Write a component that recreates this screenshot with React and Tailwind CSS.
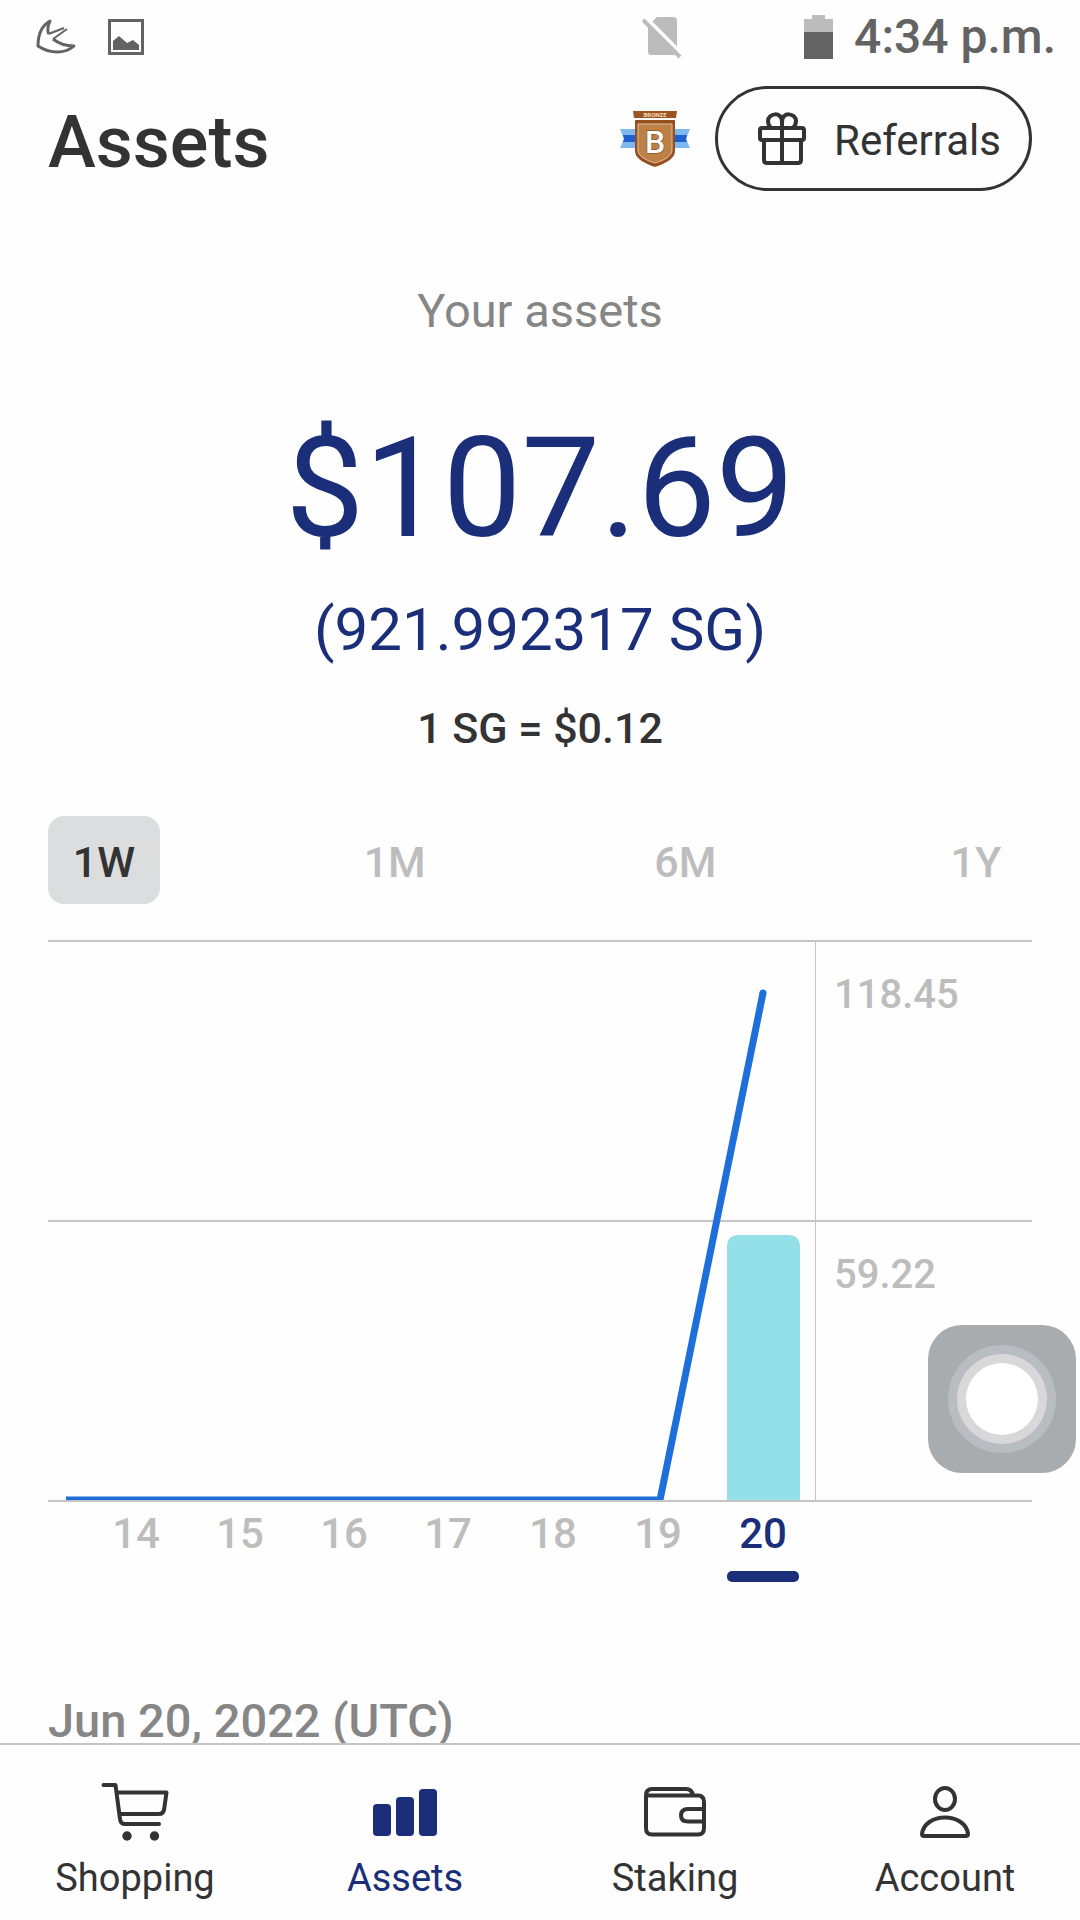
import React, { useState } from "react";

const ranges = ["1W", "1M", "6M", "1Y"];

const days = [
  { label: "14", x: 88 },
  { label: "15", x: 192 },
  { label: "16", x: 296 },
  { label: "17", x: 400 },
  { label: "18", x: 505 },
  { label: "19", x: 610 },
];

const BirdIcon = () => (
  <svg width="42" height="38" viewBox="0 0 42 38" fill="none" stroke="#636363" strokeWidth="2" aria-hidden="true">
    <path d="M28 11L12 16C11 11 12 7 14 3C5 8 2 17 2 28C14 36 29 36 38 28C29 28 22 25 17 21L30 12" stroke="none" />
    <path d="M12.500 16C11 11 12 7 14 3C5 8 2 17 2 28C14 36 29 36 38 28C29 28 22 25 17 21" strokeWidth="3" strokeLinejoin="round" />
    <path d="M12.500 16L28 10M17 21L31 11" strokeWidth="2" />
  </svg>
);

const ImageIcon = () => (
  <svg width="36" height="36" viewBox="0 0 36 36" fill="none" aria-hidden="true">
    <rect x="1.500" y="1.500" width="33" height="33" stroke="#636363" strokeWidth="3" />
    <path d="M5 22L11 17L19 24L25 21L31 26V31H5Z" fill="#636363" />
  </svg>
);

const NoSimIcon = () => (
  <svg width="40" height="44" viewBox="0 0 40 44" aria-hidden="true">
    <path d="M15 2H31Q35 2 35 6V37L35 39Q34 40 32 40H9Q6 40 6 37V11Z" fill="#bcbcbc" />
    <path d="M4 3L42 41" stroke="#fefefe" strokeWidth="4" />
    <path d="M1 5L38 42" stroke="#bcbcbc" strokeWidth="4" />
  </svg>
);

const BatteryIcon = () => (
  <svg width="30" height="44" viewBox="0 0 30 44" aria-hidden="true">
    <path d="M8 0H21V4H29V18H0V4H8Z" fill="#bcbcbc" />
    <path d="M0 17H29V44H0Z" fill="#636363" />
  </svg>
);

const BronzeBadge = () => (
  <svg width="72" height="60" viewBox="0 0 72 60" role="img" aria-label="Bronze level">
    <path d="M1 20H71L67 30L71 39H1L5 30Z" fill="#7db9ee" />
    <path d="M4 26H68L67 30L68 33H4L5 30Z" fill="#1e5fd0" />
    <path d="M14 2H58L57 9H15Z" fill="#9c5420" />
    <path d="M16 11H56V42C56 49 48 54 36 58C24 54 16 49 16 42Z" fill="#96501f" />
    <path d="M19 15H53V41C53 47 46 51 36 54C26 51 19 47 19 41Z" fill="#bd8047" stroke="#e0bf9d" strokeWidth="1" />
    <text x="36" y="8" textAnchor="middle" fontSize="6" fontWeight="700" fill="#f6dcc0">BRONZE</text>
    <text x="36" y="44" textAnchor="middle" fontSize="32" fontWeight="500" fill="#ffffff" stroke="#7c4219" strokeWidth="1" paintOrder="stroke">B</text>
  </svg>
);

const GiftIcon = () => (
  <svg width="52" height="56" viewBox="0 0 52 56" fill="none" stroke="currentColor" strokeWidth="4" strokeLinejoin="round" aria-hidden="true">
    <rect x="4" y="17" width="44" height="12" rx="2" />
    <path d="M8 29V49Q8 52 11 52H42Q45 52 45 49V29" />
    <path d="M26 17V52" />
    <path d="M26 16V11C26 0 12 2 12 10C12 13 13 15 15 17M26 11C26 0 40 2 40 10C40 13 39 15 37 17" />
  </svg>
);

const CartIcon = () => (
  <svg width="72" height="64" viewBox="0 0 72 64" fill="none" stroke="currentColor" strokeWidth="4" strokeLinecap="round" strokeLinejoin="round" aria-hidden="true">
    <path d="M4.500 5H16.500L21 39Q21.500 44 26 44H60" />
    <path d="M18 12.500H67.500L65 30Q64 34 60 34H21" />
    <circle cx="28" cy="56" r="4.700" fill="currentColor" stroke="none" />
    <circle cx="55.500" cy="56" r="4.700" fill="currentColor" stroke="none" />
  </svg>
);

const BarsIcon = () => (
  <svg width="72" height="64" viewBox="0 0 72 64" fill="currentColor" aria-hidden="true">
    <rect x="4" y="24" width="18" height="32" rx="4" />
    <rect x="27" y="17" width="18" height="39" rx="4" />
    <rect x="50" y="9" width="18" height="47" rx="4" />
  </svg>
);

const WalletIcon = () => (
  <svg width="72" height="64" viewBox="0 0 72 64" fill="none" stroke="currentColor" strokeWidth="4" strokeLinejoin="round" aria-hidden="true">
    <path d="M7 16V48Q7 54.500 13 54.500H59Q65 54.500 65 48V22Q65 15.500 59 15.500H7Q7 9 13 9H47Q53 9 54 15.500" />
    <path d="M65 29H49Q42 29 42 35.500Q42 41.500 49 41.500H65" />
  </svg>
);

const PersonIcon = () => (
  <svg width="72" height="64" viewBox="0 0 72 64" fill="none" stroke="currentColor" strokeWidth="4" strokeLinejoin="round" aria-hidden="true">
    <ellipse cx="36" cy="19" rx="10" ry="11" />
    <path d="M15 56Q13 56 13 54C14 44 24 37.500 36 37.500S58 44 59 54Q59 56 57 56Z" />
  </svg>
);

const navItems = [
  { name: "Shopping", Icon: CartIcon },
  { name: "Assets", Icon: BarsIcon },
  { name: "Staking", Icon: WalletIcon },
  { name: "Account", Icon: PersonIcon },
];

const AssetsChart = () => (
  <svg
    viewBox="0 0 984 644"
    className="block w-full mt-9 text-[42px] font-medium"
    role="img"
    aria-label="Asset value over the last week"
  >
    <defs>
      <clipPath id="plot">
        <rect x="0" y="0" width="984" height="560" />
      </clipPath>
    </defs>

    {/* Grid */}
    <g fill="#c4c4c4">
      <rect y="0" width="984" height="2" />
      <rect y="280" width="984" height="2" />
      <rect x="767" y="2" width="1" height="558" />
    </g>

    <path d="M679 560V307Q679 295 691 295H740Q752 295 752 307V560Z" fill="#93e0e8" />
    <path
      d="M18 560H612L715 53"
      fill="none"
      stroke="#1f6fdb"
      strokeWidth="7"
      strokeLinejoin="round"
      clipPath="url(#plot)"
    />
    <circle cx="715" cy="53" r="3.500" fill="#1f6fdb" />
    <rect y="560" width="984" height="2" fill="#c4c4c4" />

    {/* Value axis */}
    <g fill="#bdbdbd" fontSize="40">
      <text x="786" y="68">118.45</text>
      <text x="786" y="348">59.22</text>
    </g>

    {/* Days */}
    <g fill="#bdbdbd" textAnchor="middle">
      {days.map((day) => (
        <text key={day.label} x={day.x} y="608">
          {day.label}
        </text>
      ))}
    </g>
    <text x="715" y="608" textAnchor="middle" fill="#1a2e7a">
      20
    </text>
    <rect x="679" y="631" width="72" height="11" rx="5" fill="#1a2e7a" />
  </svg>
);

export default function App() {
  const [range, setRange] = useState("1W");

  return (
    <div className="h-screen flex flex-col bg-[#fefefe] text-[#333333] font-['Roboto',sans-serif]">
      {/* Status bar */}
      <div className="shrink-0 h-[74px] pl-9 pr-6 flex items-center justify-between">
        <div className="flex items-center gap-[30px]">
          <BirdIcon />
          <ImageIcon />
        </div>
        <div className="flex items-center">
          <NoSimIcon />
          <div className="ml-[122px] flex items-center gap-5">
            <BatteryIcon />
            <span className="text-[48px] leading-[56px] font-medium text-[#636363]">4:34 p.m.</span>
          </div>
        </div>
      </div>

      <main className="flex-1 min-h-0 overflow-y-auto [scrollbar-width:none] px-12 pt-3">
        {/* Header */}
        <div className="flex items-center justify-between">
          <h1 className="pt-2 text-[72px] leading-[80px] font-medium">Assets</h1>
          <div className="flex items-center gap-6">
            <BronzeBadge />
            <button
              type="button"
              className="h-[105px] pl-[38px] pr-7 flex items-center gap-[26px] border-3 border-[#333333] rounded-full text-[42px] leading-[48px]"
            >
              <GiftIcon />
              <span className="pt-1">Referrals</span>
            </button>
          </div>
        </div>

        {/* Balance */}
        <div className="mt-[92px] text-center">
          <p className="text-[47px] leading-[56px] text-[#868686]">Your assets</p>
          <p className="mt-[79px] text-[140px] leading-[140px] text-[#1a2e7a]">$107.69</p>
          <p className="mt-9 text-[60px] leading-[72px] text-[#1a2e7a]">(921.992317 SG)</p>
          <p className="mt-[34px] text-[43px] leading-[56px] font-medium">1 SG = $0.12</p>
        </div>

        {/* Range */}
        <div className="mt-[60px] flex justify-between">
          {ranges.map((item) => (
            <button
              key={item}
              type="button"
              onClick={() => setRange(item)}
              className={`w-28 h-[88px] pt-[3px] rounded-2xl text-[43px] leading-[56px] font-medium ${
                item === range ? "bg-[#dcdddf] text-[#333333]" : "text-[#bdbdbd]"
              }`}
            >
              {item}
            </button>
          ))}
        </div>

        <AssetsChart />

        <h2 className="mt-[109px] text-[47px] leading-[56px] font-medium text-[#868686]">Jun 20, 2022 (UTC)</h2>
      </main>

      {/* Bottom navigation */}
      <nav className="shrink-0 h-[177px] pt-[35px] grid grid-cols-4 items-start border-t-2 border-[#c4c4c4] bg-[#fefefe]">
        {navItems.map(({ name, Icon }) => (
          <a
            key={name}
            href={`#${name.toLowerCase()}`}
            className={`flex flex-col items-center gap-3 text-[38px] leading-[44px] ${
              name === "Assets" ? "text-[#1a2e7a]" : "text-[#333333]"
            }`}
          >
            <Icon />
            <span>{name}</span>
          </a>
        ))}
      </nav>

      {/* Assistive touch */}
      <button
        type="button"
        aria-label="Assistive menu"
        className="fixed right-1 bottom-[447px] size-[148px] flex items-center justify-center rounded-[34px] bg-[#a8acaf]"
      >
        <span className="size-[108px] flex items-center justify-center rounded-full bg-[#b9bcc0]">
          <span className="size-[90px] flex items-center justify-center rounded-full bg-[#d8d8da]">
            <span className="size-[72px] rounded-full bg-white" />
          </span>
        </span>
      </button>
    </div>
  );
}
